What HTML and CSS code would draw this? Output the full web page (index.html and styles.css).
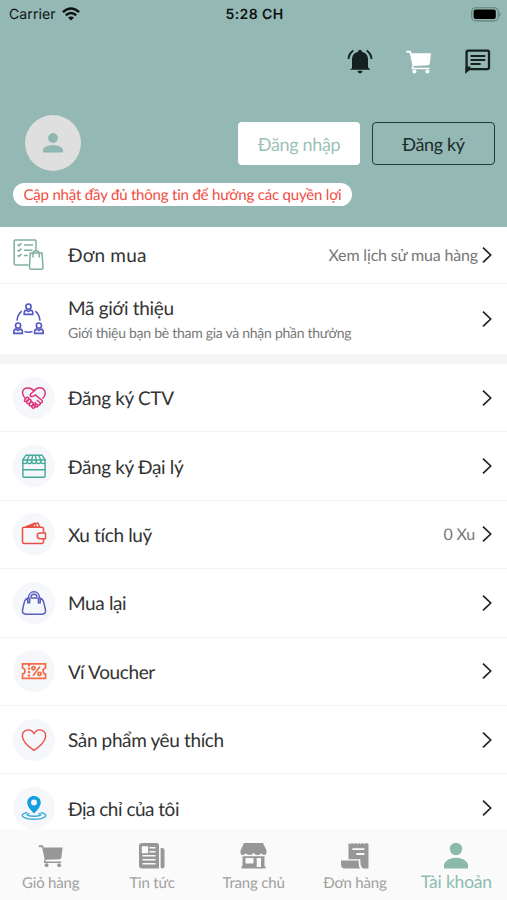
FILE: index.html
```html
<!DOCTYPE html>
<html lang="vi">
<head>
<meta charset="utf-8">
<title>Tài khoản</title>
<link rel="stylesheet" href="styles.css">
</head>
<body>
<svg class="defs" width="0" height="0">
  <symbol id="chev" viewBox="0 0 10 18"><path d="M1 1.6 8.7 9 1 16.4" fill="none" stroke="#222" stroke-width="1.7"/></symbol>
  <symbol id="cart" viewBox="0 0 26 24"><path d="M0 .8H4.4L5.7 3.3H25L23.8 13.5Q23.5 15.2 22 15.3L7.6 16 7.3 17.8H23.6V19.2H6.2Q5.4 19 5.6 18L6.4 15.3 3.7 2.8H.6Z"/><circle cx="8.4" cy="21.5" r="2"/><circle cx="21.4" cy="21.5" r="2"/></symbol>
</svg>
<div class="phone">
  <header class="top">
    <div class="status">
      <div class="carrier"><span>Carrier</span>
        <svg width="18" height="14" viewBox="0 0 18 14"><g fill="none" stroke="#0c1211" stroke-width="2.5"><path d="M.9 5.2Q9-2.2 17.1 5.2"/><path d="M3.8 8.2Q9 3.8 14.2 8.2"/></g><path d="M6 10.5Q9 8.3 12 10.5L9 13.6Z" fill="#0c1211"/></svg>
      </div>
      <div class="time">5:28 CH</div>
      <svg class="battery" width="31" height="15" viewBox="0 0 31 15"><rect x=".7" y=".7" width="26.6" height="13.2" rx="4" fill="none" stroke="#628079" stroke-width="1.1"/><rect x="2.6" y="2.5" width="22.2" height="9.4" rx="2"/><path d="M28.5 5Q31 7.3 28.5 9.5Z" fill="#628079"/></svg>
    </div>
    <div class="actions">
      <svg width="26" height="26" viewBox="0 0 26 26" fill="#14211f"><path d="M5 19.2V9.8Q5.4 4.1 11 2.8 11.2.8 13 .8 14.8.8 15 2.8 20.6 4.1 21 9.8V18.2L23.4 20.7H2.8Z"/><path d="M10.4 21.8H15.6Q15.1 24.4 13 24.4 10.9 24.4 10.4 21.8Z"/><path d="M6.3 1.5Q1.8 4.8 1.5 10M19.7 1.5Q24.2 4.8 24.5 10" fill="none" stroke="#14211f" stroke-width="2"/></svg>
      <svg width="26" height="24" fill="#fff"><use href="#cart"/></svg>
      <svg width="26" height="26" viewBox="0 0 26 26"><path d="M1.6 22V3.2Q1.6 1.7 3.1 1.7H22.5Q24 1.7 24 3.2V18.6Q24 20.1 22.5 20.1H4.3Z" fill="none" stroke="#14211f" stroke-width="2.3"/><path d="M.5 17.5H6L.5 25Z" fill="#14211f"/><path d="M5.5 7H20.3M5.5 11H20.3M5.5 15H15.6" stroke="#14211f" stroke-width="2.1"/></svg>
    </div>
    <div class="account">
      <div class="avatar"><svg width="22" height="22" viewBox="0 0 22 22" fill="#91b7b2"><circle cx="11" cy="6" r="4.9"/><path d="M1 20.5V18.2C1.2 11.5 20.8 11.5 21 18.2V20.5Z"/></svg></div>
      <div class="btn solid">Đăng nhập</div>
      <div class="btn outline">Đăng ký</div>
    </div>
    <div class="notice">Cập nhật đầy đủ thông tin để hưởng các quyền lợi</div>
  </header>

  <main class="list">
    <div class="row orders">
      <div class="icon plain"><svg width="32" height="32" viewBox="0 0 32 32" fill="none" stroke="#80afa2" stroke-width="1.5"><path d="M15.5 26H2.4Q1.2 26 1.2 24.8V2Q1.2 1 2.4 1H22Q23 1 23 2V12M11 6H20M11 11.2H19.5M11 16.5H14.8M4.7 5.5 5.9 6.8 8.4 4.2M4.7 10.8 5.9 12.1 8.4 9.5M4.7 16.2 5.9 17.5 8.4 14.9"/><path d="M17.3 14H29L30 28.3Q30 30.3 28 30.3H18.6Q16.5 30.3 16.5 28.3ZM20 18.5V15C20 10.5 26.3 10.5 26.3 15V18.5"/></svg></div>
      <div class="label">Đơn mua</div><div class="value">Xem lịch sử mua hàng</div><svg class="chev"><use href="#chev"/></svg>
    </div>
    <div class="row referral">
      <div class="icon plain"><svg width="32" height="32" viewBox="0 0 32 32" fill="none" stroke="#5357c0" stroke-width="1.6"><g id="person"><circle cx="15.5" cy="3.6" r="2.6"/><path d="M11.2 11.4V9.8Q11.4 7.4 13.4 7.1L15.5 8.6 17.6 7.1Q19.6 7.4 19.8 9.8V11.4Z"/></g><use href="#person" x="-10.4" y="19"/><use href="#person" x="10.4" y="19"/><path d="M8.7 8.2Q4.6 11.5 4 17.7M22.3 8.2Q26.4 11.5 27 17.7M11.5 28.6Q15.5 29.8 19.5 28.6"/></svg></div>
      <div class="label">Mã giới thiệu<div class="sub">Giới thiệu bạn bè tham gia và nhận phần thưởng</div></div><svg class="chev"><use href="#chev"/></svg>
    </div>
    <div class="gap"></div>
    <div class="row">
      <div class="icon"><svg width="26" height="26" viewBox="0 0 26 26" fill="none" stroke="#df3479" stroke-width="1.5" stroke-linejoin="round"><path d="M5 14.2C-.6 9 1.2 3.2 6.5 3Q10.5 2.8 13 6C16 1.6 21.8 2.1 23.5 5.5Q25.5 9.8 21.5 13.7"/><path d="M13 6 9.2 9.5C9 12 12 12.5 14.3 9.8L21.2 15.5Q22 17.5 19.6 18 19.5 20 17.2 20.3 16.7 22.3 14.5 21.8L11.8 19.5M19.4 18 15.8 15M17 20.2 13.7 17.4"/><path d="M3.6 14.5 6 12.2Q8 12 7.8 14L5.2 16.6Q3 16.8 3.6 14.5M5.8 16.7 8.2 14.3Q10.3 14.5 10.1 16.2L7.7 18.7Q5.4 19 5.8 16.7M8.3 19 10.2 16.8Q12.5 17 12.2 19L10.4 21.1Q8 21.3 8.3 19M11 21.3 13 19.2Q15 19.5 14.4 21.5L12.7 23.3Q10.5 23.3 11 21.3"/></svg></div>
      <div class="label">Đăng ký CTV</div><svg class="chev"><use href="#chev"/></svg>
    </div>
    <div class="row">
      <div class="icon"><svg width="26" height="26" viewBox="0 0 26 26" fill="none" stroke="#43aa99" stroke-width="1.4"><path d="M1.9 9V23.2Q1.9 24.3 3 24.3H23Q24.1 24.3 24.1 23.2V9M2 16.8H24M1.7 7 5 2.2H21L24.3 7V8.3C24.3 11.4 20 11.4 19.8 8.3 19.8 11.4 15.3 11.4 15.3 8.3 15.3 11.4 10.7 11.4 10.7 8.3 10.7 11.4 6.2 11.4 6.2 8.3 6 11.4 1.7 11.4 1.7 8.3ZM1.7 7H24.3M6.2 8.3V6.8L8.5 2.2M10.7 8.3V6.8L11.8 2.2M15.3 8.3V6.8L14.2 2.2M19.8 8.3V6.8L17.5 2.2"/></svg></div>
      <div class="label">Đăng ký Đại lý</div><svg class="chev"><use href="#chev"/></svg>
    </div>
    <div class="row">
      <div class="icon"><svg width="26" height="26" viewBox="0 0 26 26" fill="none" stroke="#e95043" stroke-width="1.5" stroke-linejoin="round"><path d="M22.5 12V8Q22.5 6.2 20.8 6.2H3Q1.5 6.2 1.5 7.7V20.5Q1.5 22.5 3.5 22.5H20.8Q22.5 22.5 22.5 20.8V17.8M4 6.2 13.8 2.3 15.5 6M12 3.2 17 2 18.7 6M8 6 12 4.3 12.8 6"/><path d="M24.5 12.1H19.2Q16.2 12.3 16.2 14.9 16.2 17.6 19.2 17.8H24.5Z"/></svg></div>
      <div class="label">Xu tích luỹ</div><div class="value xu">0 Xu</div><svg class="chev"><use href="#chev"/></svg>
    </div>
    <div class="row">
      <div class="icon"><svg width="26" height="26" viewBox="0 0 26 26" fill="none" stroke="#595fc0" stroke-width="1.5"><path d="M7.6 7.7Q4 8.6 3 13.3L1.5 20Q.9 24 4.8 24.2H21.2Q25.1 24 24.5 20L23 13.3Q22 8.6 18.4 7.7M9.5 8H16.5M6.8 7.5V12.8H8.6V7.5M17.4 7.5V12.8H19.2V7.5M7.3 8.3C7.6-.3 18.4-.3 18.7 8.3M9.8 7C10.6 3.3 15.4 3.3 16.2 7"/></svg></div>
      <div class="label">Mua lại</div><svg class="chev"><use href="#chev"/></svg>
    </div>
    <div class="row">
      <div class="icon"><svg width="26" height="26" viewBox="0 0 26 26" fill="none" stroke="#f46b45" stroke-width="1.7"><path d="M1.5 5.8H24.5V10Q22 10.4 22 13 22 15.6 24.5 16V20.4H1.5V16Q4 15.6 4 13 4 10.4 1.5 10Z"/><path d="M8 6V20" stroke-width="2.2" stroke-dasharray="2.2 1.3"/><path d="M19 8.5 12 17.7"/><circle cx="12.4" cy="10.2" r="1.6"/><circle cx="18.5" cy="16" r="1.6"/></svg></div>
      <div class="label">Ví Voucher</div><svg class="chev"><use href="#chev"/></svg>
    </div>
    <div class="row">
      <div class="icon"><svg width="26" height="26" viewBox="0 0 26 26" fill="none" stroke="#ea5148" stroke-width="1.4" stroke-linejoin="round"><path d="M13 23.4Q2.4 16.2 1.4 9.8C.8 2.5 9.8.3 13 6.8 16.2.3 25.2 2.5 24.6 9.8Q23.6 16.2 13 23.4Z"/></svg></div>
      <div class="label">Sản phẩm yêu thích</div><svg class="chev"><use href="#chev"/></svg>
    </div>
    <div class="row">
      <div class="icon"><svg width="26" height="26" viewBox="0 0 26 26"><path d="M13 18.6Q6.2 12 6.2 7.8C6.2-1.2 19.8-1.2 19.8 7.8Q19.8 12 13 18.6ZM13 4.6A3 3 0 1 0 13 10.6 3 3 0 0 0 13 4.6Z" fill="#159ee0" fill-rule="evenodd"/><path d="M6.3 17.5C-4 19.7 3 24.2 13 24.2S30 19.7 19.7 17.5M8.5 18.4C3.2 20 8 21.3 13 21.3S22.8 20 17.5 18.4" fill="none" stroke="#3cacdf" stroke-width="1.4"/></svg></div>
      <div class="label address">Địa chỉ của tôi</div><svg class="chev"><use href="#chev"/></svg>
    </div>
  </main>

  <nav class="tabs">
    <div class="tab"><svg width="26" height="26" viewBox="-.5 -1 27 26"><use href="#cart" width="26" height="24"/></svg><span>Giỏ hàng</span></div>
    <div class="tab"><svg width="28" height="28" viewBox="0 0 28 28"><path d="M4 1H18.5Q21 1 21 3.5V26.5H4Q1 26.5 1 23.5V3.5Q1 1 4 1Z"/><path d="M22.6 6H24Q26.5 6 26.5 8.5V23.5Q26.5 26.5 24 26.5 22.6 26.5 22.6 24Z"/><path d="M4.5 5H9.5V10.5H4.5ZM11.5 5.8H17.5M11.5 9.8H17.5M4.5 13.8H17.5M4.5 17.8H17.5M4.5 21.8H17.5" fill="#fafafa" stroke="#fafafa" stroke-width="1.4"/></svg><span>Tin tức</span></div>
    <div class="tab"><svg width="28" height="28" viewBox="-.5 0 28 28"><path d="M4.5 1H23.5L27 8.5V11Q26.8 13 24.7 13 22.7 13 21.9 11.2 21 13 18.5 13 15.3 13 14.2 11 13 13 10 13 7.5 13 6.2 11.2 5.4 13 3.3 13 1.2 13 1 11V8.5Z"/><path d="M3 14.2H25V24.3H26V26.5H2V24.3H3Z"/><path d="M6 16H14V21.5H6ZM17.2 16H21.5V25H17.2Z" fill="#fafafa"/></svg><span>Trang chủ</span></div>
    <div class="tab"><svg width="30" height="28" viewBox="0 0 30 28"><path d="M8.5 1 10.2 2 12 1 13.8 2 15.5 1 17.3 2 19 1 20.8 2 22.5 1 24.3 2 26 1 28.5 1.8V26.5H22.8Q20.4 25 20.4 21V17.2H8.5Z"/><path d="M1 18.5H18.7V22Q18.7 25 20.4 26.5H4.5Q1 26.5 1 22Z"/><path d="M12.3 7.2H24.4M16.3 12H24.4" stroke="#fafafa" stroke-width="1.8"/></svg><span>Đơn hàng</span></div>
    <div class="tab active"><svg width="26" height="28" viewBox="0 0 26 28"><circle cx="13" cy="7" r="6.2"/><path d="M1 26.5V23.8C1.4 13 24.6 13 25 23.8V26.5Z"/></svg><span>Tài khoản</span></div>
  </nav>
</div>
</body>
</html>
```
FILE: styles.css
```css
* { box-sizing: border-box; }
body { margin: 0; font-family: Lato, "Noto Sans", sans-serif; font-variant-ligatures: none; text-rendering: geometricPrecision; color: #333; background: #fff; }
.defs { position: absolute; }
.phone { width: 507px; height: 900px; display: flex; flex-direction: column; overflow: hidden; }
svg { display: block; flex: none; }

.top { height: 227px; flex: none; background: #94b8b4; }
.status { height: 28px; padding: 0 7px 0 9px; display: grid; grid-template-columns: 1fr auto 1fr; align-items: center; font-family: Inter, sans-serif; color: #0c1211; }
.carrier { display: flex; align-items: center; gap: 6px; font-size: 14px; letter-spacing: .1px; }
.time { font-size: 14px; font-weight: 600; letter-spacing: .4px; }
.battery { justify-self: end; margin-right: -2px; }
.actions { height: 68px; display: flex; justify-content: flex-end; align-items: center; gap: 33px; padding-right: 16px; }
.account { height: 87px; padding: 7px 12px 0 25px; display: flex; align-items: center; gap: 12px; }
.avatar { width: 56px; height: 56px; border-radius: 50%; background: #dfdfdf; display: flex; align-items: center; justify-content: center; margin-right: auto; }
.btn { height: 43px; padding-top: 1px; border-radius: 4px; font-size: 18px; letter-spacing: -.35px; width: 122px; display: flex; align-items: center; justify-content: center; }
.solid { background: #fff; color: #9bc1b6; }
.outline { border: 1.5px solid #233936; width: 123px; color: #1b2c2a; }
.notice { width: 339px; height: 23px; line-height: 24px; margin-left: 13px; border-radius: 12px; background: #fff; color: #ef4c42; font-size: 15px; letter-spacing: -.2px; text-align: center; white-space: nowrap; }

.list { flex: 1; min-height: 0; overflow: hidden; }
.row { height: 68.4px; padding: 0 15px 0 13px; display: flex; align-items: center; border-bottom: 1.5px solid #f4f4f5; }
.orders { height: 57px; }
.referral { height: 70px; border: 0; }
.gap { height: 10px; background: #f5f5f5; }
.icon { width: 42px; height: 42px; flex: none; border-radius: 50%; background: #f5f7fa; display: flex; align-items: center; justify-content: center; margin-right: 13px; }
.plain { background: none; border-radius: 0; justify-content: flex-start; }
.label { flex: 1; padding-top: 2px; font-size: 19px; letter-spacing: -.37px; white-space: nowrap; }
.orders .label { padding-top: 0; letter-spacing: .2px; }
.referral .label { padding-top: 0; letter-spacing: -.3px; }
.address { letter-spacing: -.5px; }
.referral .sub { font-size: 14px; line-height: 18px; letter-spacing: -.27px; margin-top: 4px; color: #777; }
.value { font-size: 16px; letter-spacing: -.16px; color: #777; margin-right: 4px; }
.xu { margin-right: 7px; padding-top: 1px; }
.chev { width: 10px; height: 18px; }

.tabs { height: 71px; flex: none; display: grid; grid-template-columns: repeat(5, 1fr); background: #fafafa; }
.tab { display: flex; flex-direction: column; align-items: center; padding-top: 13px; font-size: 15px; letter-spacing: -.2px; line-height: 20px; color: #a0a0a0; fill: #979797; white-space: nowrap; }
.tab svg { height: 28px; }
.tab span { margin-top: 3px; }
.active { color: #8dbdaf; fill: #8bb9ac; font-size: 17.5px; }
.active span { margin-top: 2px; }
```
